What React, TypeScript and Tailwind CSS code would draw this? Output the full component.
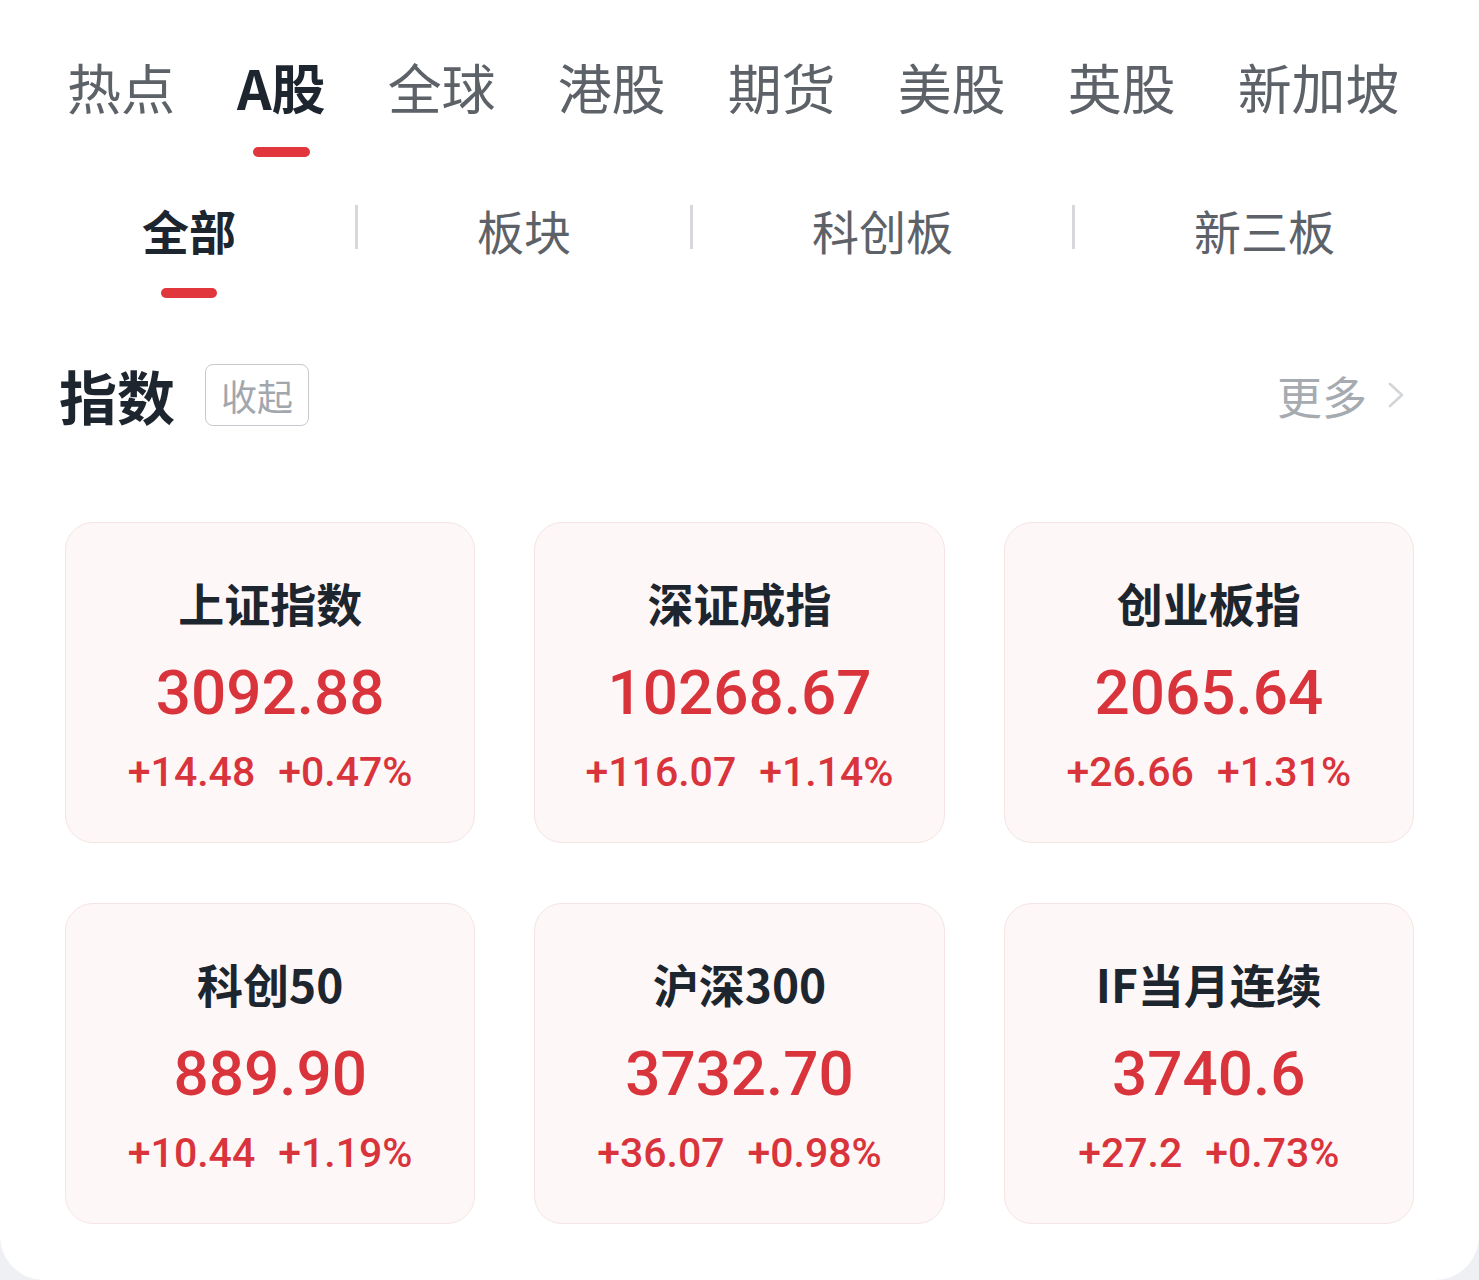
import React, { useState } from "react";

const MARKETS = ["热点", "A股", "全球", "港股", "期货", "美股", "英股", "新加坡"];
const SUB_TABS = ["全部", "板块", "科创板", "新三板"];

interface IndexItem {
    name: string;
    price: string;
    change: string;
    percent: string;
}

const INDEXES: IndexItem[] = [
    { name: "上证指数", price: "3092.88", change: "+14.48", percent: "+0.47%" },
    { name: "深证成指", price: "10268.67", change: "+116.07", percent: "+1.14%" },
    { name: "创业板指", price: "2065.64", change: "+26.66", percent: "+1.31%" },
    { name: "科创50", price: "889.90", change: "+10.44", percent: "+1.19%" },
    { name: "沪深300", price: "3732.70", change: "+36.07", percent: "+0.98%" },
    { name: "IF当月连续", price: "3740.6", change: "+27.2", percent: "+0.73%" },
];

const cjk = "font-['Noto_Sans_CJK_SC',sans-serif]";
const num = "font-['Roboto','Noto_Sans_CJK_SC',sans-serif]";

const App = () => {
    const [market, setMarket] = useState("A股");
    const [subTab, setSubTab] = useState("全部");
    const [collapsed, setCollapsed] = useState(false);

    return (
        <div className={`h-[1280px] bg-[#eef0f3] ${cjk}`}>
            <div className="h-full bg-white rounded-b-[44px] overflow-hidden">
                {/* market tabs */}
                <div className="flex gap-[62px] pl-[67px] pt-[60px]">
                    {MARKETS.map((m) => (
                        <button key={m} onClick={() => setMarket(m)} className="flex flex-col items-center">
                            <span
                                className={`text-[54px] leading-none ${
                                    market === m ? "font-bold text-[#1d252e]" : "text-[#5d6268]"
                                }`}
                            >
                                {m}
                            </span>
                            <span
                                className={`mt-[33px] h-[10px] w-[57px] rounded-full ${
                                    market === m ? "bg-[#e0363c]" : "bg-transparent"
                                }`}
                            />
                        </button>
                    ))}
                </div>

                {/* sub tabs */}
                <div className="flex items-start pl-[142px] mt-[49px]">
                    {SUB_TABS.map((t, i) => (
                        <React.Fragment key={t}>
                            {i > 0 && <span className="mx-[119px] mt-[-1px] h-[44px] w-[3px] bg-[#d6d8db]" />}
                            <button onClick={() => setSubTab(t)} className="flex flex-col items-center">
                                <span
                                    className={`text-[47px] leading-none ${
                                        subTab === t ? "font-bold text-[#1d252e]" : "text-[#5d6268]"
                                    }`}
                                >
                                    {t}
                                </span>
                                <span
                                    className={`mt-[35px] h-[10px] w-[56px] rounded-full ${
                                        subTab === t ? "bg-[#e0363c]" : "bg-transparent"
                                    }`}
                                />
                            </button>
                        </React.Fragment>
                    ))}
                </div>

                {/* section header */}
                <div className="flex items-center justify-between pl-[59px] pr-[74px] mt-[66px]">
                    <div className="flex items-center gap-[30px]">
                        <h2 className="text-[58px] leading-none font-bold text-[#1d252e]">指数</h2>
                        <button
                            onClick={() => setCollapsed(!collapsed)}
                            className="h-[62px] w-[104px] flex items-center justify-center border-[1.5px] border-[#c6cacf] rounded-[8px] text-[36px] leading-none text-[#a2a7ad]"
                        >
                            {collapsed ? "展开" : "收起"}
                        </button>
                    </div>
                    <button className="flex items-center gap-[20px] text-[45px] leading-none text-[#a6abb1]">
                        更多
                        <svg width="18" height="28" viewBox="0 0 18 28" fill="none">
                            <path d="M3 3 L15 14 L3 25" stroke="#d3d6d9" strokeWidth="2.6" strokeLinecap="round" strokeLinejoin="round" />
                        </svg>
                    </button>
                </div>

                {/* index cards */}
                {!collapsed && (
                    <div className="grid grid-cols-3 gap-x-[59px] gap-y-[60px] px-[65px] mt-[96px]">
                        {INDEXES.map((item) => (
                            <div
                                key={item.name}
                                className="h-[321px] rounded-[28px] border-[1.5px] border-[#f5e4e4] bg-[#fdf7f7] flex flex-col items-center pt-[56px]"
                            >
                                <div className="text-[46px] leading-none font-bold text-[#1d252e]">{item.name}</div>
                                <div className={`mt-[37px] text-[62px] leading-none font-medium text-[#d9333b] ${num}`}>
                                    {item.price}
                                </div>
                                <div className={`mt-[28px] flex gap-[23px] text-[41px] leading-none font-medium text-[#d9333b] ${num}`}>
                                    <span>{item.change}</span>
                                    <span>{item.percent}</span>
                                </div>
                            </div>
                        ))}
                    </div>
                )}
            </div>
        </div>
    );
};

export default App;
